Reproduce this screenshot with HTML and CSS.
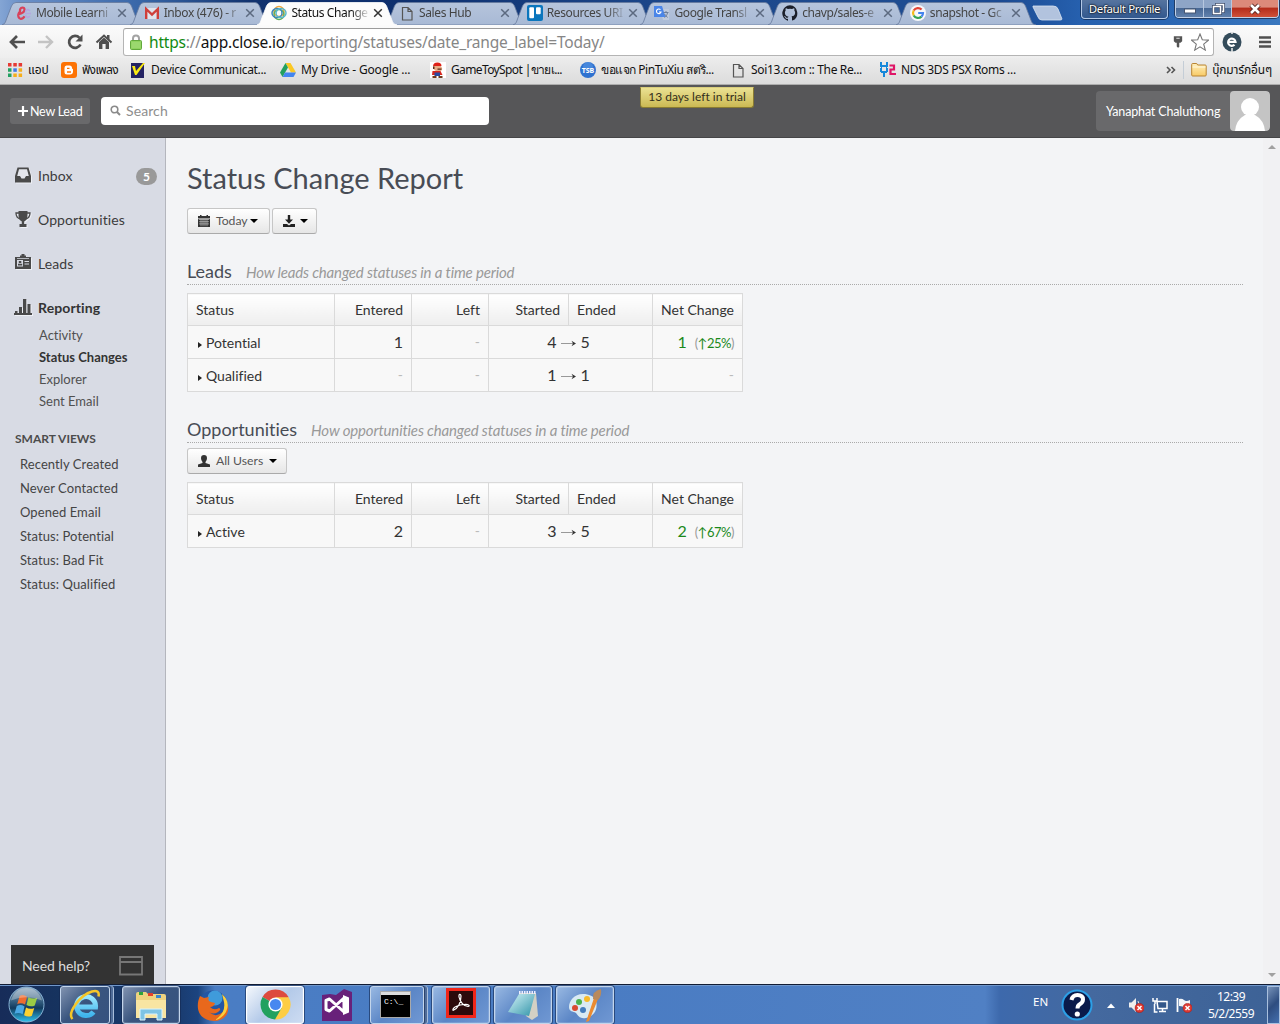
FILE: index.html
```
<!DOCTYPE html>
<html lang="en">
<head>
<meta charset="utf-8">
<title>Status Change Report</title>
<link rel="stylesheet" href="styles.css">
</head>
<body>
<svg width="0" height="0" class="defs">
  <defs>
    <linearGradient id="tabfill" x1="0" y1="0" x2="0" y2="1"><stop offset="0" stop-color="#b6c5dc"/><stop offset="1" stop-color="#a8b9d5"/></linearGradient>
    <linearGradient id="folder" x1="0" y1="0" x2="0" y2="1"><stop offset="0" stop-color="#fff0bd"/><stop offset="1" stop-color="#f8ca66"/></linearGradient>
    <linearGradient id="orb" x1="0" y1="0" x2="0" y2="1"><stop offset="0" stop-color="#8fa9c0"/><stop offset=".45" stop-color="#2d5779"/><stop offset=".6" stop-color="#123a5e"/><stop offset="1" stop-color="#2fc3ee"/></linearGradient>
    <linearGradient id="ie" x1="0" y1="0" x2="0" y2="1"><stop offset="0" stop-color="#9ae8ff"/><stop offset="1" stop-color="#3fb4ec"/></linearGradient>
    <linearGradient id="pad" x1="0" y1="0" x2="1" y2="1"><stop offset="0" stop-color="#d6f4f8"/><stop offset="1" stop-color="#2f93a8"/></linearGradient>
    <symbol id="tab" viewBox="0 0 140 24"><path d="M0 24C3 23 3.500 21 4.500 18L9.500 5Q11 1.500 14 1.500H125Q128 1.500 129.500 5L134.500 18C136 22 136.500 23 140 24Z"/></symbol>
    <symbol id="page" viewBox="0 0 16 16"><path d="M3.500 2.500h5.500l4 4v8.500h-9.500zM9 2.500v4h4" fill="none" stroke="#555" stroke-width="1.200"/></symbol>
    <symbol id="close" viewBox="0 0 10 10"><path d="M1.200 1.200l7.600 7.600M8.800 1.200l-7.600 7.600" stroke="currentColor" stroke-width="1.500"/></symbol>
    <symbol id="badx" viewBox="0 0 10 10"><circle cx="5" cy="5" r="4.600" fill="#dd3a33" stroke="#a81f1b" stroke-width=".6"/><path d="M3 3l4 4M7 3l-4 4" stroke="#fff" stroke-width="1.500"/></symbol>
  </defs>
</svg>

<div class="tabstrip">
  <div class="tabs">
    <div class="tab"><svg class="shape"><use href="#tab"/></svg><div class="tabbody">
      <svg class="ic" viewBox="0 0 16 16"><path d="M2 9.500Q8.500 8 8.500 4.500 8.500 2.500 6.500 2.500 3.500 3 4 6.500 1.500 9 2.500 12q1.500 3 4.500 1 1-.7 1.500-1.800" fill="none" stroke="#d9415a" stroke-width="2.200"/><path d="M9 8.500h6M14 6q-3-3-4.500 1M14 11q-3 3-4.500-1" stroke="#b5a4e0" stroke-width="1.700" fill="none"/></svg>
      <span class="tt">Mobile Learni</span><svg class="cl"><use href="#close"/></svg></div></div>
    <div class="tab"><svg class="shape"><use href="#tab"/></svg><div class="tabbody">
      <svg class="ic" viewBox="0 0 16 16"><path d="M1 3h14v11H1z" fill="#dfe3ec"/><path d="M2.200 14V4L8 9.500 13.800 4v10" fill="none" stroke="#cf3f3b" stroke-width="2.400"/></svg>
      <span class="tt">Inbox (476) - r</span><svg class="cl"><use href="#close"/></svg></div></div>
    <div class="tab active"><svg class="shape"><use href="#tab"/></svg><div class="tabbody">
      <svg class="ic" viewBox="0 0 16 16"><g fill="none" stroke-width="1.500"><ellipse cx="8" cy="6.500" rx="5" ry="5" stroke="#f0a63b"/><ellipse cx="8" cy="9.500" rx="5" ry="5" stroke="#62ad5a"/><ellipse cx="6" cy="8" rx="5" ry="4.500" stroke="#3d87bd"/><ellipse cx="10" cy="8" rx="5" ry="4.500" stroke="#59b8ca"/></g></svg>
      <span class="tt">Status Change</span><svg class="cl"><use href="#close"/></svg></div></div>
    <div class="tab"><svg class="shape"><use href="#tab"/></svg><div class="tabbody">
      <svg class="ic"><use href="#page"/></svg>
      <span class="tt">Sales Hub</span><svg class="cl"><use href="#close"/></svg></div></div>
    <div class="tab"><svg class="shape"><use href="#tab"/></svg><div class="tabbody">
      <svg class="ic" viewBox="0 0 16 16"><rect width="16" height="16" rx="2" fill="#0b76bd"/><rect x="2.300" y="2.300" width="4.700" height="11" rx="1" fill="#fff"/><rect x="9" y="2.300" width="4.700" height="7" rx="1" fill="#fff"/></svg>
      <span class="tt">Resources URI</span><svg class="cl"><use href="#close"/></svg></div></div>
    <div class="tab"><svg class="shape"><use href="#tab"/></svg><div class="tabbody">
      <svg class="ic" viewBox="0 0 16 16"><path d="M6 4h9v11H9z" fill="#bfcadd"/><path d="M0 1h8l3.500 11H0z" fill="#4a85e8"/><path d="M6.500 4.700A2.300 2.300 0 1 0 7 7H5" fill="none" stroke="#fff" stroke-width="1.100"/><path d="M9.500 7.500h5M12 6v1.500M13.500 8c-.5 2-1.500 3.500-3 4.500M10.500 9l3 3.500" stroke="#6c7f9c" fill="none"/></svg>
      <span class="tt">Google Transl</span><svg class="cl"><use href="#close"/></svg></div></div>
    <div class="tab"><svg class="shape"><use href="#tab"/></svg><div class="tabbody">
      <svg class="ic" viewBox="0 0 16 16"><path fill="#1b1f2a" d="M8 .2a8 8 0 0 0-2.500 15.500c.4.100.5-.2.500-.4v-1.500c-2.200.5-2.700-1-2.700-1-.4-.9-.9-1.200-.9-1.200-.7-.5.1-.5.100-.5.800.1 1.200.8 1.200.8.700 1.300 1.900.9 2.300.7.100-.5.300-.9.500-1.100-1.800-.2-3.600-.9-3.600-4 0-.9.300-1.600.8-2.100-.1-.2-.4-1 .1-2.100 0 0 .7-.2 2.200.8a7.500 7.500 0 0 1 4 0c1.500-1 2.200-.8 2.200-.8.4 1.100.2 1.900.1 2.100.5.600.8 1.300.8 2.100 0 3.100-1.900 3.700-3.600 3.900.300.3.500.8.500 1.500v2.200c0 .2.100.5.500.4A8 8 0 0 0 8 .2"/></svg>
      <span class="tt">chavp/sales-e</span><svg class="cl"><use href="#close"/></svg></div></div>
    <div class="tab"><svg class="shape"><use href="#tab"/></svg><div class="tabbody">
      <svg class="ic" viewBox="0 0 16 16"><circle cx="8" cy="8" r="8" fill="#f6f7fa"/><g fill="none" stroke-width="2.200"><path d="M11.600 4.600A5 5 0 0 0 3.700 5.500" stroke="#e24436"/><path d="M3.700 5.500a5 5 0 0 0 0 5" stroke="#f5bb18"/><path d="M3.700 10.500a5 5 0 0 0 7.800 1.100" stroke="#38a455"/><path d="M11.500 11.600A5 5 0 0 0 13 8H8.200" stroke="#4484ee"/></g></svg>
      <span class="tt">snapshot - Gc</span><svg class="cl"><use href="#close"/></svg></div></div>
    <svg class="newtab" viewBox="0 0 32 16"><path d="M1 1h20q4 0 5 3l4 10q0 1-2 1H10q-3 0-4-3L1 2z" fill="#b2c3de" stroke="#dbe5f3" stroke-width=".8"/></svg>
  </div>
  <div class="profile">Default Profile</div>
  <div class="winbtns">
    <span class="wb"><svg viewBox="0 0 14 14"><rect x="1.500" y="7" width="11" height="4" fill="#fff" stroke="#475673"/></svg></span>
    <span class="wb"><svg viewBox="0 0 14 14"><g fill="none" stroke="#3f4d6a" stroke-width="3"><path d="M5.500 4V2.500h7v7H11"/><rect x="2.500" y="4.500" width="7" height="7"/></g><g fill="none" stroke="#fff" stroke-width="1.500"><path d="M5.500 3V2.500h7v7H11"/><rect x="2.500" y="4.500" width="7" height="7"/></g></svg></span>
    <span class="wb red"><svg viewBox="0 0 14 14"><path d="M3 3l8 8M11 3l-8 8" stroke="#53231f" stroke-width="4.500"/><path d="M3 3l8 8M11 3l-8 8" stroke="#fff" stroke-width="2.600"/></svg></span>
  </div>
</div>

<div class="toolbar">
  <svg class="nav" viewBox="0 0 18 18"><path d="M17 9H3M9 3L3 9l6 6" fill="none" stroke="#4f4f4f" stroke-width="2.700"/></svg>
  <svg class="nav" viewBox="0 0 18 18"><path d="M1 9h14M9 3l6 6-6 6" fill="none" stroke="#c3c3c3" stroke-width="2.400"/></svg>
  <svg class="nav" viewBox="0 0 18 18"><path d="M14.500 11.500A6 6 0 1 1 13.500 4.800" fill="none" stroke="#4f4f4f" stroke-width="2.700"/><path d="M16.500 1.500V8.500H9.500z" fill="#4f4f4f"/></svg>
  <svg class="nav" viewBox="0 0 18 18"><path d="M1.500 9.500L9 2.500l7.500 7" fill="none" stroke="#4f4f4f" stroke-width="2"/><path d="M4 9l5-4.500L14 9v7h-3.400v-5H7.400v5H4zM12 2h2.500v5L12 5z" fill="#4f4f4f"/></svg>
  <div class="omnibox">
    <svg class="lock" viewBox="0 0 12 16"><path d="M3 8V4.500a3 3 0 0 1 6 0V8" fill="none" stroke="#a3a3a3" stroke-width="2"/><rect x=".5" y="6.500" width="11" height="9" rx="1" fill="#8fd25e" stroke="#62a83c"/><path d="M1.500 9h9M1.500 11h9M1.500 13h9" stroke="#b1e58c" stroke-width=".7"/></svg>
    <span class="url"><b>https</b>://<i>app.close.io</i>/reporting/statuses/date_range_label=Today/</span>
    <svg class="key" viewBox="0 0 12 16"><path d="M1 1h10v6L9 9H3L1 7zM4.500 9h3v5L6 15l-1.500-1.500z" fill="#555"/><path d="M4 3.500h4" stroke="#fff"/></svg>
    <svg class="star" viewBox="0 0 18 18"><path d="M9 1l2.300 5.700 6.200.4-4.800 4 1.600 6L9 13.800 3.700 17.100l1.600-6-4.800-4 6.200-.4z" fill="#fff" stroke="#777" stroke-width="1.100"/></svg>
  </div>
  <svg class="ext" viewBox="0 0 20 20"><circle cx="10" cy="10" r="9.500" fill="#344c5b"/><path d="M6.500 9.800h7A3.700 3.700 0 1 0 12.500 12.800" fill="none" stroke="#fff" stroke-width="2.200"/><path d="M10 16v4M10 0v2" stroke="#eee" stroke-width="1.500"/></svg>
  <svg class="menu" viewBox="0 0 14 14"><path d="M1 2.500h12M1 7h12M1 11.500h12" stroke="#505050" stroke-width="2.700"/></svg>
</div>

<div class="bookmarks">
  <div class="bm w1"><svg viewBox="0 0 16 16"><path d="M1 1h3.500v3.500H1zM6.300 1h3.500v3.500H6.300zM11.600 1h3.500v3.500h-3.500z" fill="#e63a34"/><path d="M1 6.300h3.500v3.500H1zM1 11.600h3.500v3.500H1z" fill="#24a162"/><path d="M6.300 6.300h3.500v3.500H6.300z" fill="#3f79e6"/><path d="M11.600 6.300h3.500v3.500h-3.500zM6.300 11.600h3.500v3.500H6.300zM11.600 11.600h3.500v3.500h-3.500z" fill="#f5ae1c"/></svg><span class="th">แอป</span></div>
  <div class="bm w2"><svg viewBox="0 0 16 16"><rect width="16" height="16" rx="3" fill="#fd7304"/><path d="M5.500 3.500h3a2.500 2.500 0 0 1 2.500 2.500q0 1 1 1.200v2.300a3 3 0 0 1-3 3H6a2.500 2.500 0 0 1-2.500-2.500V6a2.500 2.500 0 0 1 2-2.500z" fill="#fff"/><path d="M6 6.300h2.500M6 10h4" stroke="#fd7304" stroke-width="1.300"/></svg><span class="th w">ฟังเพลง</span></div>
  <div class="bm"><svg viewBox="0 0 16 16"><rect x="1" y="1" width="13" height="15" fill="#242363"/><path d="M2 4h3l1 5L13 1l2 0L6.500 13H5z" fill="#fbea13"/></svg><span class="lt">Device Communicat...</span></div>
  <div class="bm"><svg viewBox="0 0 16 16"><path d="M5.500 1h5L16 10.500h-5z" fill="#fbc824"/><path d="M5.500 1L0 10.500 2.500 15 8 5.500z" fill="#23a05f"/><path d="M5 10.500h11L13.500 15h-11z" fill="#4385f0"/></svg><span class="lt drive">My Drive - Google ...</span></div>
  <div class="bm"><svg viewBox="0 0 16 16"><rect width="16" height="16" fill="#fff"/><path d="M3 4.500Q3 .5 7.500.5q4 0 4 3.500l-2 .5z" fill="#df2219"/><path d="M3.500 4h7q3 2.500.5 5H6Q3 8 3.500 4z" fill="#e9ad87"/><path d="M7.500 6.500h4v1.200h-4zM3 4.500h1.500V7H3z" fill="#59301d"/><path d="M2.500 9h8l2 4H2z" fill="#d7261e"/><path d="M4.500 10.500h5.500V14H4.500z" fill="#2a4aa0"/><path d="M2.500 14h4v2h-4zM8.500 14h4v2h-4z" fill="#6f3b1d"/></svg><span class="lt game">GameToySpot |ขายเ...</span></div>
  <div class="bm"><svg viewBox="0 0 16 16"><circle cx="8" cy="8" r="8" fill="#2f72d0"/><circle cx="8" cy="5" r="5" fill="#5e9be8" opacity=".5"/><text x="8" y="11" class="tsb">TSB</text></svg><span class="lt mix">ขอแจก PinTuXiu สตริ...</span></div>
  <div class="bm"><svg><use href="#page"/></svg><span class="lt soi">Soi13.com :: The Re...</span></div>
  <div class="bm"><svg viewBox="0 0 16 16"><path d="M1 0v4h3M7 0v4H4M1 10V6M7 10V6M1 10h6M4 10v5M1 6h1M6 6h1" stroke="#1688da" stroke-width="2" fill="none"/><path d="M9.500 3.500h4.500v4H10.500v4.500H16" stroke="#df1667" stroke-width="2.200" fill="none"/></svg><span class="lt">NDS 3DS PSX Roms ...</span></div>
  <div class="bmright"><svg class="more" viewBox="0 0 10 8"><path d="M1 1l3 3-3 3M5.500 1l3 3-3 3" fill="none" stroke="#555" stroke-width="1.600"/></svg><i class="sep"></i><svg viewBox="0 0 16 16"><path d="M.7 4V2.500q0-1 1-1h4l1 1.500h7.500q1 0 1 1v9q0 1-1 1H1.700q-1 0-1-1z" fill="url(#folder)" stroke="#b98432"/><path d="M1.500 5h13" stroke="#fff8df"/></svg><span class="th o">บุ๊กมาร์กอื่นๆ</span></div>
</div>

<header class="appbar">
  <div class="newlead"><svg viewBox="0 0 10 10"><path d="M5 0v10M0 5h10" stroke="#fff" stroke-width="2.200"/></svg>New Lead</div>
  <div class="search"><svg viewBox="0 0 11 11"><circle cx="4.500" cy="4.500" r="3.300" fill="none" stroke="#8a8a8a" stroke-width="1.600"/><path d="M7 7l3 3" stroke="#8a8a8a" stroke-width="2"/></svg>Search</div>
  <div class="trial">13 days left in trial</div>
  <div class="user"><span>Yanaphat Chaluthong</span><svg viewBox="0 0 40 40"><rect width="40" height="40" fill="#c4c4c4"/><circle cx="20" cy="16" r="9" fill="#fff"/><path d="M5 40q1-11 10-16h10q9 5 10 16z" fill="#fff"/></svg></div>
</header>

<div class="main">
  <aside class="side">
    <nav>
      <div class="item"><svg viewBox="0 0 18 18"><path d="M3.500 1.500h11L17 10v6.500H1V10z" fill="#4a4a4a"/><path d="M5 3.300h8L14.800 10H12l-1.500 2.500h-3L6 10H3.200z" fill="#e4e6ec"/></svg><span>Inbox</span><em>5</em></div>
      <div class="item"><svg viewBox="0 0 18 18"><path d="M4.500 1h9v4q0 5-3.300 6.500V14h2.300v3h-7v-3h2.300v-2.500Q4.500 10 4.500 5z" fill="#4a4a4a"/><path d="M5 3H2q0 5 4.500 6M13 3h3q0 5-4.500 6" fill="none" stroke="#4a4a4a" stroke-width="1.300"/></svg><span>Opportunities</span></div>
      <div class="item"><svg viewBox="0 0 18 18"><path d="M1 3h5V1.500h1.500V0h3v1.500H12V3h5v12H1z" fill="#4a4a4a"/><path d="M3 6h6v6.500H3zM10.500 7H15v1h-4.500zM10.500 9.500H15v1h-4.500zM3 4h12v.8H3z" fill="#d8dbe4"/><path d="M4.800 7h2.500v2H4.800zM4 9.800h4.200v1.700H4z" fill="#4a4a4a"/></svg><span>Leads</span></div>
      <div class="item on"><svg viewBox="0 0 18 18"><path d="M1 13h2.500v3H1zM5 9h3v7H5zM9 1h3.300v15H9zM13.500 6h3v10h-3zM0 15h18v2H0z" fill="#4a4a4a"/></svg><span>Reporting</span></div>
    </nav>
    <div class="subs"><a>Activity</a><a class="cur">Status Changes</a><a>Explorer</a><a>Sent Email</a></div>
    <h4>SMART VIEWS</h4>
    <div class="views"><a>Recently Created</a><a>Never Contacted</a><a>Opened Email</a><a>Status: Potential</a><a>Status: Bad Fit</a><a>Status: Qualified</a></div>
    <div class="help"><span>Need help?</span><svg viewBox="0 0 24 20"><path d="M1 1h22v17.500H1zM1 6h22" fill="none" stroke="#777" stroke-width="1.800"/></svg></div>
  </aside>
  <section class="content">
    <h1>Status Change Report</h1>
    <div class="btns">
      <span class="btn b1"><svg class="bi" viewBox="0 0 12 12"><path d="M0 1h2V0h1.500v1h5V0H10v1h2v11H0z" fill="#333"/><path d="M1 4.500h10M1 6.700h10M1 8.900h10M3 4.500v6.800M5 4.500v6.800M7 4.500v6.800M9 4.500v6.800" stroke="#eee" stroke-width=".5"/><path d="M0 3.700h12" stroke="#eee" stroke-width=".7"/></svg><span>Today</span><i class="caret"></i></span>
      <span class="btn b2"><svg class="bi" viewBox="0 0 12 12"><path d="M4.800 0h2.400v4.500H10L6 8.700 2 4.500h2.800z" fill="#222"/><path d="M0 9h4l2 1.500L8 9h4v3H0z" fill="#222"/></svg><i class="caret"></i></span>
    </div>
    <h2>Leads<small>How leads changed statuses in a time period</small></h2>
    <table>
      <colgroup><col class="c1"><col class="c2"><col class="c2"><col class="c3"><col class="c4"><col class="c5"></colgroup>
      <tr><th class="l">Status</th><th>Entered</th><th>Left</th><th>Started</th><th class="l">Ended</th><th>Net Change</th></tr>
      <tr><td class="l"><i class="tri"></i>Potential</td><td class="n">1</td><td class="d">-</td><td colspan="2" class="n m"><div class="flow"><b>4</b><svg viewBox="0 0 16 7"><path d="M0 3.500h13" stroke="#999"/><path d="M10.500 .8l4.500 2.700-4.500 2.700 1.500-2.700z" fill="#333"/></svg><b>5</b></div></td><td class="n"><span class="g">1</span><small>(<u>↑25%</u>)</small></td></tr>
      <tr><td class="l"><i class="tri"></i>Qualified</td><td class="d">-</td><td class="d">-</td><td colspan="2" class="n m"><div class="flow"><b>1</b><svg viewBox="0 0 16 7"><path d="M0 3.500h13" stroke="#999"/><path d="M10.500 .8l4.500 2.700-4.500 2.700 1.500-2.700z" fill="#333"/></svg><b>1</b></div></td><td class="d">-</td></tr>
    </table>
    <h2 class="second">Opportunities<small>How opportunities changed statuses in a time period</small></h2>
    <div class="btns users"><span class="btn b3"><svg class="bi" viewBox="0 0 12 12"><path d="M6 0q3 0 3 3.300 0 2.200-1.500 3.700V8L12 9.500V12H0V9.500L4.500 8V7Q3 5.500 3 3.300 3 0 6 0" fill="#333"/></svg><span>All Users</span><i class="caret"></i></span></div>
    <table>
      <colgroup><col class="c1"><col class="c2"><col class="c2"><col class="c3"><col class="c4"><col class="c5"></colgroup>
      <tr><th class="l">Status</th><th>Entered</th><th>Left</th><th>Started</th><th class="l">Ended</th><th>Net Change</th></tr>
      <tr><td class="l"><i class="tri"></i>Active</td><td class="n">2</td><td class="d">-</td><td colspan="2" class="n m"><div class="flow"><b>3</b><svg viewBox="0 0 16 7"><path d="M0 3.500h13" stroke="#999"/><path d="M10.500 .8l4.500 2.700-4.500 2.700 1.500-2.700z" fill="#333"/></svg><b>5</b></div></td><td class="n"><span class="g">2</span><small>(<u>↑67%</u>)</small></td></tr>
    </table>
  </section>
  <div class="scroll"><i class="up"></i><i class="down"></i></div>
</div>

<footer class="taskbar">
  <div class="start"><svg viewBox="0 0 38 38"><circle cx="19" cy="19" r="18" fill="url(#orb)" stroke="#8ab4d6"/><path d="M12 10q4-2 7.500 1l-2 8q-4-2.500-8-.5z" fill="#ee6c30"/><path d="M21 11.500q4 2.500 9 .5l-2.500 8q-4 2-8.500-.5z" fill="#9bcc45"/><path d="M9 20.500q4-2 8 .5l-2 8q-4-2.500-8.300-.5z" fill="#4aa8e4"/><path d="M18.500 22q4 2.500 8.500.5l-2.500 8q-4 2-8-.5z" fill="#fcd12f"/><path d="M3 15Q7 2 19 2t16 13Q19 8 3 15" fill="#fff" opacity=".3"/></svg></div>
  <div class="task dark stack t-ie"><svg viewBox="0 0 32 32"><path d="M10 18H26.500A9.500 9.500 0 1 0 24.500 23" fill="none" stroke="url(#ie)" stroke-width="5"/><path d="M3.500 30C-2 24 11 6 23 2.500q8-2 6.500 5" fill="none" stroke="#f5c629" stroke-width="2.500"/></svg></div>
  <div class="task dark t-ex"><svg viewBox="0 0 34 32"><path d="M2 5q0-2 2-2h8l2 2h16q2 0 2 2v22H2z" fill="#eed37f"/><path d="M5 3h4v3H5z" fill="#2fa33b"/><path d="M14 4h5v3h-5z" fill="#e3412c"/><path d="M22 6h5v3h-5z" fill="#3887cf"/><path d="M2 11h30v18H2z" fill="#f8e5a2"/><path d="M6 31V20h22v11h-5v-6H11v6z" fill="#7ec4e4" stroke="#d9f3ff"/></svg></div>
  <div class="task bare t-ff"><svg viewBox="0 0 32 32"><circle cx="16" cy="16" r="14.500" fill="#2456a4"/><circle cx="18" cy="9" r="7.500" fill="#3f9bdb"/><path d="M3 7l4 2 5-1q-2 4 2 5l4 1q-1 4-5 4 4 4 9 1 3 1-1 4-5 3-9 0 5 5 11 2 6-3 6-11 4 4 1 11-4 7-13 7C1 31-2 18 3 7" fill="#e8681c"/><path d="M25 5q9 8 4 18-4 7-11 8 11-7 9-18z" fill="#fbcf3c"/></svg></div>
  <div class="task lit t-ch"><svg viewBox="0 0 32 32"><path d="M16 16L2.600 8.200A15.500 15.500 0 0 1 29.600 8.500z" fill="#dd4b3e"/><path d="M16 16l13.600-7.500A15.500 15.500 0 0 1 15.500 31.500z" fill="#fdcd45"/><path d="M16 16l6.300 3.700-6.800 11.800A15.500 15.500 0 0 1 2.600 8.200z" fill="#22a15f"/><path d="M16 8.500h13.600L24 17z" fill="#fdcd45"/><circle cx="16" cy="16" r="7.300" fill="#fff"/><circle cx="16" cy="16" r="5.800" fill="#4788f0"/></svg></div>
  <div class="task bare t-vs"><svg viewBox="0 0 30 32"><path d="M0 6l8-1 6 1 8-6 8 3v29H0z" fill="#68217a"/><path d="M4 11.500l3.500-1.500L22 23V9L7.500 22 4 20.500z" fill="none" stroke="#fff" stroke-width="3" stroke-linejoin="round"/><path d="M21 6l6 2.500v15L21 26z" fill="#fff"/></svg></div>
  <div class="task blue stack t-cm"><svg viewBox="0 0 32 28"><rect x=".5" y=".5" width="30" height="26" fill="#000" stroke="#a9a9a9"/><path d="M1 1h29v3H1z" fill="#ddd"/><text x="4" y="13" class="cmd">C:\_</text></svg></div>
  <div class="task blue t-pdf"><svg viewBox="0 0 30 30"><rect x="1.500" y="1.500" width="27" height="27" fill="#2c0a0b" stroke="#f0261a" stroke-width="3"/><path d="M7 22.500c5-2 8-8 8-14.500-.3-2.500-2.500-2-2 1 1 5 5 9.500 9 9.500 2.500-.5 1-2.500-4-2-4 .3-12 2.500-11 6" fill="none" stroke="#fff" stroke-width="1.200"/></svg></div>
  <div class="task blue t-np"><svg viewBox="0 0 32 32"><path d="M12 4l17 0 2 23-6 4-6-4z" fill="#d3d0c4"/><path d="M12 5h16l-6 22L1 23z" fill="url(#pad)"/><path d="M12 3.500h17" stroke="#eef" stroke-width="3" stroke-dasharray="1.500 1"/></svg></div>
  <div class="task blue t-pt"><svg viewBox="0 0 34 34"><path d="M15 6C6 6 1 13 1 19c0 5 4 4 7 6 2 3 4 6 10 5 9-2 12-10 10-17-2-5-7-7-13-7" fill="#d9eaf3"/><circle cx="7" cy="20" r="3" fill="#d94a31"/><circle cx="11" cy="14" r="3" fill="#4bb24e"/><circle cx="19" cy="11" r="3" fill="#f7ba2a"/><circle cx="15" cy="22" r="3" fill="#447dbd"/><path d="M26 10l4 1-9 22-3 1z" fill="#ea8b32"/><path d="M25 11q-1-8 8-10 1 7-3 11z" fill="#b98a5c"/></svg></div>
  <div class="tray">
    <span class="en">EN</span>
    <svg class="q" viewBox="0 0 32 32"><circle cx="16" cy="16" r="14.500" fill="#0a1a4a" stroke="#2c9fe6" stroke-width="2"/><path d="M10.500 11q1-5 6-5 5.500 0 5.500 4.500 0 3-3.500 5-2 1.300-2 4" fill="none" stroke="#fff" stroke-width="4"/><circle cx="16.300" cy="25" r="2.600" fill="#fff"/></svg>
    <svg class="upt" viewBox="0 0 8 5"><path d="M0 5l4-4.500L8 5z" fill="#fff"/></svg>
    <svg class="ti" viewBox="0 0 16 16"><path d="M1 5.500h2.500L8 1v14l-4.500-4.500H1z" fill="#eee"/><path d="M10 4q2 3 0 6" fill="none" stroke="#ddd"/><use href="#badx" x="6.500" y="6" width="10" height="10"/></svg>
    <svg class="ti" viewBox="0 0 16 16"><path d="M5 4.500h10v7H6z" fill="#33578a" stroke="#fff" stroke-width="1.500"/><path d="M7 14.500h7M10.500 12v2M2.500 7v8h3M1 1v3h4V1M3 4v3" fill="none" stroke="#fff" stroke-width="1.500"/></svg>
    <svg class="ti" viewBox="0 0 16 16"><path d="M1.500 1v14" stroke="#fff" stroke-width="1.800"/><path d="M3 2q3-1 5 1t6 0v7q-3 1-6 0T3 9z" fill="#f1f4f8"/><use href="#badx" x="6.500" y="6" width="10" height="10"/></svg>
    <span class="clock">12:39<br>5/2/2559</span>
  </div>
  <div class="peek"></div>
</footer>
</body>
</html>
```

FILE: styles.css
```
* { box-sizing: border-box; }
html, body { margin: 0; padding: 0; }
body { width: 1280px; height: 1024px; overflow: hidden; display: flex; flex-direction: column; font-family: Lato, sans-serif; font-variant-ligatures: none; color: #333; }
svg { display: block; flex: none; }
.defs { position: absolute; }

/* window title bar with tabs */
.tabstrip { height: 25px; flex: none; display: flex; background: linear-gradient(90deg, #84a5d4 0, #6c91c8 20px, #3866a8 140px, #12336f 250px, #0d2f6e 400px, #1b4588 640px, #1e4c91 900px, #1b4a92 1000px, #2660ae 1080px, #2c68b4 1180px, #3a78bf 1280px); }
.tabs { display: flex; width: 1080px; flex: none; padding-left: 2px; }
.tab { width: 127.700px; height: 25px; flex: none; display: grid; position: relative; z-index: 1; }
.tab.active { z-index: 3; }
.tab > * { grid-area: 1 / 1; }
.shape { width: 140px; height: 24px; margin: 1px -12px 0 0; overflow: visible; fill: url(#tabfill); stroke: #66799c; stroke-width: .8; }
.active .shape { fill: #fcfcfc; stroke: #fcfcfc; }
.tabbody { display: flex; align-items: center; width: 127px; height: 25px; padding: 1px 0 0 14px; color: #444; z-index: 1; }
.active .tabbody { color: #111; padding-left: 14px; }
.ic { width: 16px; height: 16px; margin-right: 4px; }
.tt { width: 78px; font: 12px/16px "Noto Sans", "Open Sans", sans-serif; letter-spacing: -.4px; white-space: nowrap; -webkit-mask-image: linear-gradient(90deg, #000 60px, transparent 79px); mask-image: linear-gradient(90deg, #000 60px, transparent 79px); }
.cl { width: 10px; height: 10px; margin-left: 3px; color: #5c6a80; }
.active .cl { color: #333; margin-left: 4px; }
.newtab { width: 32px; height: 16px; margin: 5px 0 0 8px; }
.profile { width: 87px; height: 19px; border: 1px solid #b4c9e6; border-top: 0; border-radius: 0 0 4px 4px; background: linear-gradient(#56749f, #32588e); box-shadow: 0 0 0 1px #183969; color: #fff; text-shadow: 0 0 2px #000, 0 0 2px #000; font: 11.500px/18px "Noto Sans", sans-serif; letter-spacing: -.4px; text-align: center; white-space: nowrap; margin-left: 1px; }
.winbtns { display: flex; height: 18px; margin-left: 7px; border: 1px solid #c1d0e6; border-top: 0; border-radius: 0 0 4px 4px; overflow: hidden; box-shadow: 0 0 0 1px #203c66; }
.wb { width: 28px; border-right: 1px solid #b7c7df; background: linear-gradient(#8ea5c7 45%, #486895 50%, #6181ac); display: flex; justify-content: center; align-items: center; }
.wb svg { width: 14px; height: 14px; }
.wb.red { width: 46px; border: 0; background: linear-gradient(#dc8a7a 40%, #b52e1c 50%, #cf5138); }

/* browser toolbar */
.toolbar { height: 33px; flex: none; background: linear-gradient(#fbfbfb, #eeeeee); display: flex; align-items: center; padding: 1px 0 0 8px; }
.nav { width: 18px; height: 18px; margin-right: 11px; }
.omnibox { width: 1091px; height: 28px; border: 1px solid #b4b4b4; border-top-color: #9c9c9c; border-radius: 3px; background: #fff; display: flex; align-items: center; padding-left: 6px; margin-left: -1px; }
.lock { width: 12px; height: 16px; }
.url { font: 15.500px/24px "Noto Sans", "Open Sans", sans-serif; color: #868686; margin-left: 7px; width: 1024px; white-space: nowrap; letter-spacing: -.2px; }
.url b { font-weight: 400; color: #128a12; }
.url i { font-style: normal; color: #111; }
.key { width: 10px; height: 14px; margin-right: 8px; }
.star { width: 18px; height: 18px; }
.ext { width: 20px; height: 20px; margin-left: 8px; }
.menu { width: 14px; height: 14px; margin-left: 16px; }
.bookmarks { height: 27px; flex: none; background: linear-gradient(#ececec, #dcdcdc); border-bottom: 1px solid #adadad; display: flex; align-items: center; padding: 0 0 2px 7px; }
.bm { width: 150px; flex: none; display: flex; align-items: center; gap: 5px; color: #111; font: 12px/18px "Noto Sans", "Open Sans", sans-serif; white-space: nowrap; }
.bm.w1 { width: 54px; }
.bm.w2 { width: 69px; }
.bm svg { width: 16px; height: 16px; }
.lt { letter-spacing: -.33px; }
.drive { letter-spacing: -.18px; }
.game { letter-spacing: -.62px; }
.mix { letter-spacing: -.47px; }
.soi { letter-spacing: -.35px; }
.th { font: 12px/18px "Noto Sans Thai", "Noto Sans", sans-serif; color: #111; }
.w { letter-spacing: -.6px; }
.o { letter-spacing: -.15px; }
.tsb { font: 700 7px "Noto Sans", sans-serif; fill: #fff; text-anchor: middle; }
.bmright { display: flex; align-items: center; margin-left: auto; padding-right: 8px; white-space: nowrap; }
.bmright svg { width: 16px; height: 16px; margin-right: 5px; }
.bmright .more { width: 10px; height: 8px; margin: 0; }
.sep { width: 1px; height: 18px; background: #c4cdd6; margin: 0 7px 0 7px; }

/* application header */
.appbar { height: 53px; flex: none; background: #565658; border-bottom: 1px solid #454547; display: flex; padding-left: 10px; }
.newlead { width: 80px; height: 26px; margin-top: 13px; background: #69696b; border-radius: 3px; color: #fff; font-size: 12.500px; letter-spacing: -.25px; display: flex; align-items: center; padding-left: 8px; gap: 2px; white-space: nowrap; }
.newlead svg { width: 10px; height: 10px; }
.search { width: 388px; height: 28px; margin: 12px 0 0 11px; background: #fff; border-radius: 4px; color: #8e8e8e; font-size: 14px; letter-spacing: .1px; display: flex; align-items: center; padding: 0 0 2px 9px; gap: 5px; }
.search svg { width: 11px; height: 11px; }
.trial { width: 114px; height: 21px; margin: 2px 0 0 151px; border: 1px solid #8a7c32; border-top-color: #d8cd7c; border-radius: 0 0 3px 3px; background: linear-gradient(#ebe192, #cbb953); color: #332f1c; font-size: 12px; line-height: 18px; text-align: center; white-space: nowrap; }
.user { width: 174px; height: 40px; margin: 6px 10px 0 auto; background: #69696b; border-radius: 4px; display: flex; align-items: center; justify-content: space-between; padding-left: 10px; color: #fff; font-size: 12.500px; letter-spacing: -.15px; white-space: nowrap; overflow: hidden; }
.user svg { width: 40px; height: 40px; border-radius: 4px; }

/* page body */
.main { height: 846px; flex: none; display: flex; background: #f3f4f6; }
.side { width: 166px; flex: none; background: #d8dbe4; border-right: 1px solid #b4b6bd; display: flex; flex-direction: column; padding-top: 16px; }
.item { height: 44px; display: flex; align-items: center; padding: 0 8px 0 14px; font-size: 14px; color: #3c3c3c; }
.item svg { width: 18px; height: 18px; margin-right: 6px; filter: drop-shadow(1px 1px 0 #eef0f5); margin-top: -2px; }
.item span { margin-top: -1px; letter-spacing: .1px; }
.item em { margin-left: auto; width: 21px; height: 17px; border-radius: 9px; background: #999; color: #fff; font: 700 12px/17px Lato, sans-serif; text-align: center; }
.item.on { font-weight: 700; color: #333; }
.subs { display: flex; flex-direction: column; padding: 10px 0 0 39px; margin-top: -16px; }
.subs a { font-size: 13px; line-height: 22px; color: #505050; }
.subs .cur { font-weight: 700; color: #333; }
.side h4 { margin: 17px 0 0 15px; font-size: 12px; line-height: 20px; font-weight: 700; color: #4c4c4c; }
.views { display: flex; flex-direction: column; padding: 3px 0 0 20px; }
.views a { font-size: 13px; line-height: 24px; letter-spacing: .08px; color: #444; }
.help { width: 143px; height: 39px; margin: auto 0 0 11px; background: #333; color: #ddd; display: flex; align-items: center; justify-content: space-between; padding: 2px 11px 0 11px; font-size: 14px; letter-spacing: -.1px; }
.help svg { width: 24px; height: 20px; }
.content { width: 1097px; padding: 21px 20px 0 21px; flex: none; }
h1 { margin: 0; font-size: 29px; line-height: 38px; font-weight: 400; color: #484c55; white-space: nowrap; }
.btns { display: flex; gap: 2px; margin-top: 11px; height: 26px; }
.btn { height: 26px; display: flex; align-items: center; border: 1px solid #c6c6c6; border-bottom-color: #aaa; border-radius: 3px; background: linear-gradient(#fff, #e6e6e6); color: #555; font-size: 12.200px; padding-left: 10px; white-space: nowrap; }
.btn span { margin-top: -1px; }
.b1 { width: 83px; } .b2 { width: 45px; } .b3 { width: 100px; }
.bi { width: 12px; height: 12px; margin-right: 6px; }
.b2 .bi { margin-right: 3px; }
.b3 .caret { margin-left: 6px; }
.caret { border: 4px solid transparent; border-top-color: #000; border-bottom: 0; margin-left: 2px; flex: none; }
h2 { margin: 26px 0 8px; height: 25px; border-bottom: 1px dotted #aaa; font-size: 18px; line-height: 23px; font-weight: 400; color: #484c55; white-space: nowrap; }
h2 small { font-size: 15px; font-style: italic; color: #999; margin-left: 14px; letter-spacing: -.16px; }
h2.second { margin: 26px 0 5px; }
.users { margin: 0 0 8px; }
table { width: 556px; border-collapse: collapse; table-layout: fixed; background: #f8f8f8; }
.c1 { width: 147px; } .c2 { width: 77px; } .c3 { width: 80px; } .c4 { width: 84px; } .c5 { width: 90px; }
th, td { border: 1px solid #dadada; padding: 0 8px; text-align: right; font-size: 14px; font-weight: 400; color: #333; }
th { height: 32px; background: linear-gradient(#fff, #eee); white-space: nowrap; line-height: 20px; }
td { height: 33px; line-height: 20px; }
td.l { padding-top: 1px; }
.l { text-align: left; }
td.n { font-size: 16px; white-space: nowrap; }
td.d { color: #bbb; }
.tri { display: inline-block; border: 3px solid transparent; border-left: 4px solid #222; border-right: 0; margin: 0 4px 0 2px; }
.flow { display: flex; align-items: center; justify-content: center; gap: 4px; padding-right: 4px; }
.flow svg { width: 16px; height: 7px; margin-top: 2px; }
.flow b { font-weight: 400; }
.g { color: #1b891b; }
td small { font-size: 13px; color: #999; margin-left: 8px; letter-spacing: -.5px; }
td u { color: #1b891b; text-decoration: none; }
.scroll { width: 17px; background: #f1f1f3; display: flex; flex-direction: column; justify-content: space-between; align-items: center; padding: 7px 0; }
.scroll i { border: 4px solid transparent; }
.scroll .up { border-bottom-color: #a0a0a0; border-top: 0; }
.scroll .down { border-top-color: #a0a0a0; border-bottom: 0; }

/* desktop taskbar */
.taskbar { height: 40px; flex: none; border-top: 1px solid #111c34; box-shadow: inset 0 1px 0 #6f96ca; display: flex; align-items: center; background: linear-gradient(90deg, #172c59 0, #16335f 60px, #1a3c70 180px, #1b4480 198px, #4a7dc4 215px, #4a7cc3 600px, #5080c4 985px, #3d69ac 1000px, #44699f 1090px, #3d6296 1280px); }
.start { width: 55px; padding-left: 8px; flex: none; }
.start svg { width: 37px; height: 37px; }
.task { height: 38px; flex: none; display: flex; align-items: center; justify-content: center; border-radius: 3px; border: 1px solid #c3d5eb; box-shadow: inset 0 0 0 1px rgba(255,255,255,.15), 0 0 0 1px rgba(20,40,80,.6); }
.dark { background: linear-gradient(135deg, #8193b0, #39557f 45%, #36527f); }
.blue { background: linear-gradient(135deg, #98b8e2, #5b86c6 50%, #7098d3); }
.lit { background: linear-gradient(135deg, #f3f7fc, #b4cae9 50%, #cddcf2); border-color: #fff; }
.task.bare { border: 0; box-shadow: none; }
.stack { box-shadow: 0 0 0 1px rgba(20,40,80,.6), 3px 0 0 0 #4f6c98, 4px 0 0 0 #a7bcd9; }
.t-ie { width: 50px; margin-left: 5px; } .t-ie svg { width: 32px; height: 32px; }
.t-ex { width: 58px; margin-left: 12px; } .t-ex svg { width: 34px; height: 32px; }
.t-ff { width: 66px; } .t-ff svg { width: 32px; height: 32px; }
.t-ch { width: 58px; } .t-ch svg { width: 31px; height: 31px; }
.t-vs { width: 66px; } .t-vs svg { width: 30px; height: 32px; }
.t-cm { width: 54px; } .t-cm svg { width: 32px; height: 28px; margin-right: 2px; }
.cmd { font: 8px "Liberation Mono", monospace; fill: #fff; }
.t-pdf { width: 58px; margin-left: 8px; } .t-pdf svg { width: 30px; height: 30px; margin: 0 0 4px; }
.t-np { width: 58px; margin-left: 4px; } .t-np svg { width: 32px; height: 32px; }
.t-pt { width: 58px; margin-left: 4px; } .t-pt svg { width: 34px; height: 34px; }
.tray { margin-left: auto; display: flex; align-items: center; color: #fff; font: 12px/17px "Noto Sans", "Open Sans", sans-serif; padding-top: 1px; }
.en { margin-bottom: 7px; width: 28px; font-size: 11.500px; }
.q { width: 32px; height: 32px; margin-right: 14px; }
.upt { width: 8px; height: 5px; margin-right: 13px; }
.ti { width: 16px; height: 16px; margin-right: 8px; }
.clock { width: 58px; text-align: center; letter-spacing: -.5px; margin-left: 2px; }
.peek { width: 13px; height: 38px; margin-left: 7px; border: 1px solid #a9c0de; background: linear-gradient(135deg, #7691b8, #2e4d80 50%, #446fae); }
```
